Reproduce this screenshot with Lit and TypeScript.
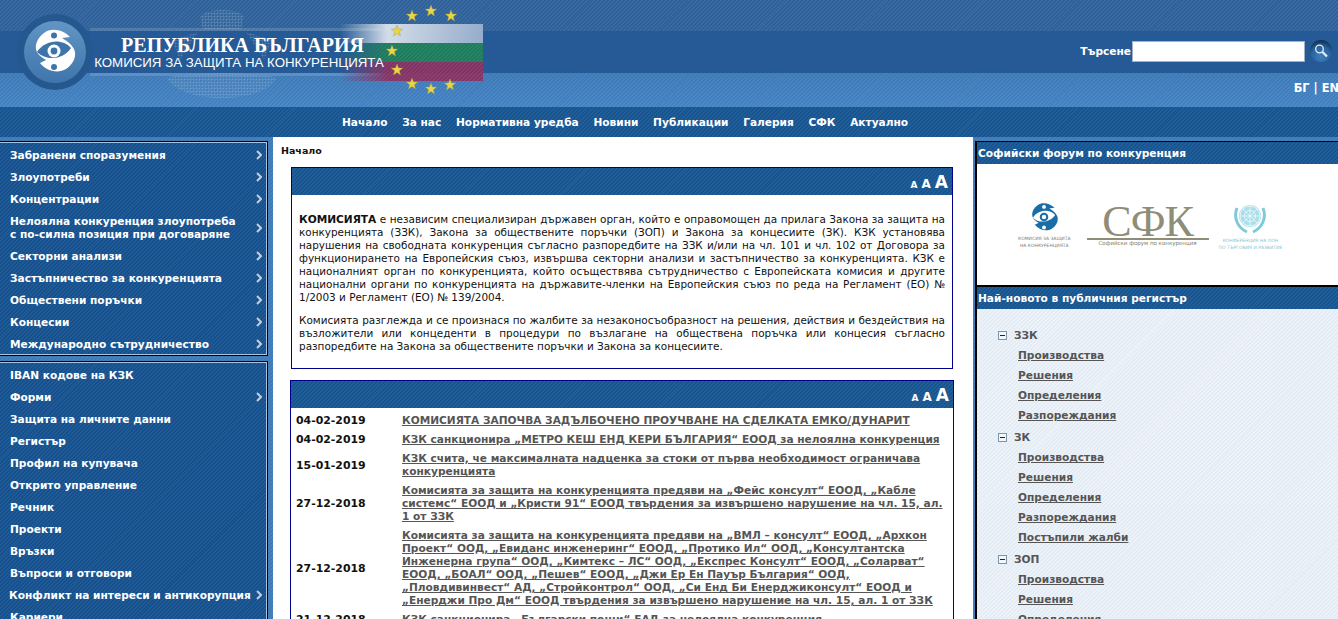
import { LitElement, html, css, svg } from "lit";
import { customElement } from "lit/decorators.js";

type MenuItem = { label: string; arrow?: boolean };
type NewsItem = { date: string; title: string };
type TreeGroup = { name: string; links: string[] };

const menuMain: MenuItem[] = [
  { label: "Забранени споразумения", arrow: true },
  { label: "Злоупотреби", arrow: true },
  { label: "Концентрации", arrow: true },
  { label: "Нелоялна конкуренция злоупотреба с по-силна позиция при договаряне", arrow: true },
  { label: "Секторни анализи", arrow: true },
  { label: "Застъпничество за конкуренцията", arrow: true },
  { label: "Обществени поръчки", arrow: true },
  { label: "Концесии", arrow: true },
  { label: "Международно сътрудничество", arrow: true },
];

const menuOther: MenuItem[] = [
  { label: "IBAN кодове на КЗК" },
  { label: "Форми", arrow: true },
  { label: "Защита на личните данни" },
  { label: "Регистър" },
  { label: "Профил на купувача" },
  { label: "Открито управление" },
  { label: "Речник" },
  { label: "Проекти" },
  { label: "Връзки" },
  { label: "Въпроси и отговори" },
  { label: "Конфликт на интереси и антикорупция", arrow: true },
  { label: "Кариери" },
];

const navItems = ["Начало", "За нас", "Нормативна уредба", "Новини", "Публикации", "Галерия", "СФК", "Актуално"];

const news: NewsItem[] = [
  { date: "04-02-2019", title: "КОМИСИЯТА ЗАПОЧВА ЗАДЪЛБОЧЕНО ПРОУЧВАНЕ НА СДЕЛКАТА ЕМКО/ДУНАРИТ" },
  { date: "04-02-2019", title: "КЗК санкционира „МЕТРО КЕШ ЕНД КЕРИ БЪЛГАРИЯ“ ЕООД за нелоялна конкуренция" },
  { date: "15-01-2019", title: "КЗК счита, че максималната надценка за стоки от първа необходимост ограничава конкуренцията" },
  {
    date: "27-12-2018",
    title: "Комисията за защита на конкуренцията предяви на „Фейс консулт“ ЕООД, „Кабле системс“ ЕООД и „Кристи 91“ ЕООД твърдения за извършено нарушение на чл. 15, ал. 1 от ЗЗК",
  },
  {
    date: "27-12-2018",
    title: "Комисията за защита на конкуренцията предяви на „ВМЛ – консулт“ ЕООД, „Архкон Проект“ ООД, „Евиданс инженеринг“ ЕООД, „Протико Ил“ ООД, „Консултантска Инженерна група“ ООД, „Кимтекс – ЛС“ ООД, „Експрес Консулт“ ЕООД, „Соларват“ ЕООД, „БОАЛ“ ООД, „Пешев“ ЕООД, „Джи Ер Ен Пауър България“ ООД, „Пловдивинвест“ АД, „Стройконтрол“ ООД, „Си Енд Би Енерджиконсулт“ ЕООД и „Енерджи Про Дм“ ЕООД твърдения за извършено нарушение на чл. 15, ал. 1 от ЗЗК",
  },
  { date: "21-12-2018", title: "КЗК санкционира „Български пощи“ ЕАД за нелоялна конкуренция" },
];

const tree: TreeGroup[] = [
  { name: "ЗЗК", links: ["Производства", "Решения", "Определения", "Разпореждания"] },
  { name: "ЗК", links: ["Производства", "Решения", "Определения", "Разпореждания", "Постъпили жалби"] },
  { name: "ЗОП", links: ["Производства", "Решения", "Определения"] },
];

// ring of the EU stars, the ones on the right sit behind the flag
const stars = [
  [412, 16], [431, 11], [451, 16], [397, 31], [392, 51], [397, 70], [412, 84], [431, 89], [450, 85],
];

const starPoints = (cx: number, cy: number, r: number) => {
  const pts: string[] = [];
  for (let i = 0; i < 10; i++) {
    const rad = i % 2 ? r * 0.42 : r;
    const a = -Math.PI / 2 + (i * Math.PI) / 5;
    pts.push(`${(cx + rad * Math.cos(a)).toFixed(1)},${(cy + rad * Math.sin(a)).toFixed(1)}`);
  }
  return pts.join(" ");
};

// eye logo, drawn around 0,0 and about 42 units tall
const eyeMark = (fg: string, bg: string) => svg`
  <path fill=${fg} d="M16 -14 C10 -21 -3 -24 -10 -18 C-17 -13 -20 -5 -17 1 C-15 5 -11 7 -8 9 L-14 12 C-8 20 4 23 12 18 C20 13 23 4 20 -2 C17 -8 11 -11 8 -13 Z"/>
  <path fill=${bg} d="M-17 1 C-9 -11 8 -13 17 -3 C10 8 -7 11 -17 1 Z"/>
  <circle r="6.5" fill=${fg}/>
  <circle r="3.4" fill=${bg}/>
  <circle cx="0" cy="-15.5" r="3" fill=${bg}/>
  <circle cx="0" cy="16" r="3" fill=${bg}/>
`;

@customElement("app-root")
export class AppRoot extends LitElement {
  static styles = css`
    :host {
      display: block;
      height: 619px;
      overflow: hidden;
      font-family: "DejaVu Sans", Verdana, sans-serif;
      font-size: 10.6px;
      line-height: 13px;
      --stripes: repeating-linear-gradient(
        135deg,
        rgba(255, 255, 255, 0.06) 0 1.4px,
        rgba(255, 255, 255, 0) 1.4px 2.8px
      );
      background: var(--stripes), #3d7ab6;
    }

    /* header bands */
    .header {
      position: relative;
      color: #fff;
      overflow: hidden;
    }
    .band-top {
      height: 31px;
      background: var(--stripes), #2e6199;
    }
    .band-brand {
      height: 42px;
      background: #265a96;
      display: flex;
      align-items: center;
      justify-content: flex-end;
      padding-right: 6px;
    }
    .band-lang {
      height: 34px;
      background: var(--stripes), linear-gradient(#3c79b7, #4282c2);
      display: flex;
      align-items: center;
      justify-content: flex-end;
      font-size: 11.4px;
      font-weight: bold;
      white-space: nowrap;
      padding-bottom: 3px;
      box-sizing: border-box;
      margin-right: -1px;
    }
    .search {
      display: flex;
      align-items: center;
      font-weight: bold;
      margin-top: -2px;
    }
    .search input {
      box-sizing: border-box;
      width: 173px;
      height: 21px;
      margin: 0 5px 0 1px;
      padding: 0;
      border: 1px solid #9fb3c8;
      background: #fff;
    }
    .search-btn {
      width: 22px;
      height: 22px;
      display: block;
    }
    .brand-art {
      position: absolute;
      left: 0;
      top: 0;
      pointer-events: none;
    }
    .flag {
      position: absolute;
      left: 340px;
      top: 24px;
      width: 143px;
      opacity: 0.92;
      -webkit-mask-image: linear-gradient(90deg, transparent 0, #000 48px);
      mask-image: linear-gradient(90deg, transparent 0, #000 48px);
    }
    .flag div {
      height: 19px;
    }
    .flag .white {
      background: var(--stripes), linear-gradient(90deg, #e4eaf1 30%, #9db2cf);
    }
    .flag .green {
      background: var(--stripes), #1d7f56;
    }
    .flag .red {
      background: var(--stripes), #8b2f60;
    }
    .title-strip {
      position: absolute;
      left: 90px;
      top: 28px;
      width: 290px;
      height: 42px;
      border-top: 3px solid rgba(255, 255, 255, 0.14);
      border-bottom: 3px solid rgba(255, 255, 255, 0.14);
    }
    .brand-text {
      position: absolute;
      left: 93px;
      top: 36px;
      width: 292px;
      text-align: center;
      white-space: nowrap;
    }
    .brand-text .republic {
      font: bold 20px/19px "Liberation Serif", serif;
      margin-left: 7px;
    }
    .brand-text .commission {
      font: 13.3px/15px "Liberation Sans", Arial, sans-serif;
    }

    .nav {
      height: 30px;
      background: var(--stripes), #165491;
      display: flex;
      align-items: center;
      gap: 14.7px;
      padding-left: 342px;
      font-weight: bold;
      color: #fff;
      white-space: nowrap;
    }

    /* three columns */
    .main {
      display: grid;
      grid-template-columns: 273px 700px 365px;
      align-items: start;
    }
    .left {
      padding: 4px 5px 0 0;
      display: flex;
      flex-direction: column;
      gap: 5px;
    }
    .menu {
      border: 1px solid #000;
      border-left: 0;
      box-shadow: inset 0 1px 0 #a9c4de, inset -1px 0 0 #a9c4de, inset 0 -1px 0 #a9c4de;
      padding: 1px 1px 1px 0;
      background: var(--stripes), #14508e;
      color: #fff;
      font-weight: bold;
    }
    .menu-row {
      display: flex;
      align-items: center;
      justify-content: space-between;
      min-height: 22px;
      padding: 2px 4px 0 10px;
      box-sizing: border-box;
    }
    .menu-row.two-line {
      height: 35px;
    }
    .menu-row span {
      max-width: 234px;
    }
    .menu-row.wide span {
      max-width: none;
      white-space: nowrap;
      margin-left: -1px;
    }
    .chev {
      flex: none;
      width: 6px;
      height: 10px;
    }

    .content {
      background: #fff;
      color: #111;
      min-height: 482px;
      padding: 7px 0 0 18px;
    }
    .crumb {
      font-weight: bold;
      font-size: 9.5px;
      margin: 0 0 10px -10px;
    }
    .panel {
      border: 1px solid #00008b;
      width: 660px;
    }
    .panel + .panel {
      margin: 11px 0 0 -1px;
      width: 662px;
    }
    .panel-head {
      height: 27px;
      background: var(--stripes), #165491;
      color: #fff;
      font-weight: bold;
      display: flex;
      justify-content: flex-end;
      align-items: baseline;
      gap: 4px;
      padding: 4px 4px 0 0;
      box-sizing: border-box;
      line-height: 20px;
    }
    .a-s {
      font-size: 9px;
    }
    .a-m {
      font-size: 12px;
    }
    .a-l {
      font-size: 17px;
    }
    .intro {
      padding: 18px 7px 15px;
      text-align: justify;
      font-size: 10.45px;
    }
    .intro b {
      font-size: 10.6px;
    }
    .intro p {
      margin: 0 0 10px;
    }
    .intro p:last-child {
      margin: 0;
    }
    .news {
      display: grid;
      grid-template-columns: 106px 1fr;
      padding: 3px 8px 0 5px;
      align-items: center;
    }
    .news .date {
      font-weight: bold;
      font-size: 10.9px;
    }
    .news a {
      padding: 3px 0;
      font-weight: bold;
      color: #555;
      text-decoration: underline;
    }

    .right {
      padding: 4px 0 0 2px;
    }
    .side {
      border-left: 2px solid #000;
      border-top: 1px solid #000;
    }
    .side-head {
      height: 22px;
      display: flex;
      align-items: center;
      padding-left: 1px;
      background: var(--stripes), #165491;
      color: #fff;
      font-weight: bold;
    }
    .banner {
      height: 121px;
      background: #fff;
      border-bottom: 2px solid #000;
      display: flex;
      align-items: center;
      padding-left: 41px;
      color: #7d7d72;
    }
    .org {
      display: flex;
      flex-direction: column;
      align-items: center;
      font-size: 4.5px;
      line-height: 7px;
      text-align: center;
      margin-top: 2px;
    }
    .org svg {
      display: block;
      margin-bottom: 3px;
    }
    .sfk {
      margin: 2px 10px 0 16px;
      width: 122px;
      text-align: center;
      font-size: 5.5px;
      line-height: 6px;
    }
    .sfk strong {
      display: block;
      font: 44px/32px "Liberation Serif", serif;
      color: #8f8d78;
      letter-spacing: -1px;
      border-bottom: 2px solid #8f8d78;
    }
    .un {
      color: #7fc4d3;
    }
    .register {
      background: repeating-linear-gradient(
          135deg,
          rgba(255, 255, 255, 0.35) 0 1.4px,
          rgba(255, 255, 255, 0) 1.4px 2.8px
        ),
        #e3ecf4;
      padding: 15px 0 0 21px;
      height: 320px;
      color: #555;
      font-weight: bold;
    }
    .tree-head {
      height: 22px;
      display: flex;
      align-items: center;
      gap: 7px;
    }
    .toggle {
      width: 7px;
      height: 7px;
      border: 1px solid #7b95ad;
      background: #f4f7fa;
      position: relative;
    }
    .toggle::after {
      content: "";
      position: absolute;
      left: 1px;
      right: 1px;
      top: 3px;
      height: 1px;
      background: #222;
    }
    .tree-link {
      display: block;
      height: 20px;
      line-height: 18px;
      margin-left: 20px;
      color: #555;
      text-decoration: underline;
    }
  `;

  renderMenu(items: MenuItem[]) {
    return html`<div class="menu">
      ${items.map(
        (item) => html`<div class="menu-row ${item.label.length > 50 ? "two-line" : ""} ${item.label.startsWith("Конфликт") ? "wide" : ""}">
          <span>${item.label}</span>
          ${item.arrow
            ? html`<svg class="chev" viewBox="0 0 6 10"><path d="M1 1 L5 5 L1 9" fill="none" stroke="#c3ced9" stroke-width="2"/></svg>`
            : ""}
        </div>`
      )}
    </div>`;
  }

  renderSizes() {
    return html`<div class="panel-head"><span class="a-s">A</span><span class="a-m">A</span><span class="a-l">A</span></div>`;
  }

  render() {
    return html`
      <header class="header">
        <div class="band-top"></div>
        <div class="band-brand">
          <div class="search">
            Търсене<input type="text" aria-label="Търсене" />
            <svg class="search-btn" viewBox="0 0 22 22">
              <defs>
                <radialGradient id="sb" cx="0.5" cy="0.75" r="0.75">
                  <stop offset="0" stop-color="#3f7fbe" />
                  <stop offset="0.6" stop-color="#2a639e" />
                  <stop offset="1" stop-color="#0f2f50" />
                </radialGradient>
              </defs>
              <circle cx="11" cy="11" r="11" fill="url(#sb)" />
              <circle cx="9.5" cy="9" r="3.8" fill="none" stroke="#e6edf4" stroke-width="1.3" />
              <path d="M12.5 12 L17 16.5" stroke="#e6edf4" stroke-width="2.2" />
            </svg>
          </div>
        </div>
        <div class="band-lang">БГ | EN</div>
        <div class="nav">${navItems.map((n) => html`<span>${n}</span>`)}</div>

        <div class="title-strip"></div>
        <svg class="brand-art" width="500" height="107" viewBox="0 0 500 107">
          <defs>
            <linearGradient id="ball" x1="0" y1="0" x2="0" y2="1">
              <stop offset="0" stop-color="#6295c5" />
              <stop offset="1" stop-color="#3f75ab" />
            </linearGradient>
            <pattern id="dots" width="3" height="3" patternUnits="userSpaceOnUse">
              <circle cx="1.5" cy="1.5" r="1.1" fill="#c5d2df" />
            </pattern>
          </defs>
          <!-- faint state crest behind the title -->
          <g opacity="0.3" fill="url(#dots)">
            <path d="M203 30 L200 16 C208 8 236 8 244 16 L241 30 Z" />
            <path d="M172 40 L198 32 H246 L272 40 L264 60 L246 32 L198 32 L180 60 Z" />
            <path d="M167 78 C178 72 266 72 277 78 C270 90 250 98 222 98 C194 98 174 90 167 78 Z" />
          </g>
          <circle cx="55" cy="52" r="38" fill="#24588f" />
          <circle cx="55" cy="52" r="31" fill="url(#ball)" />
          <g transform="translate(54 51)">${eyeMark("#fff", "#3e74aa")}</g>
        </svg>
        <div class="flag">
          <div class="white"></div>
          <div class="green"></div>
          <div class="red"></div>
        </div>
        <svg class="brand-art" width="500" height="107" viewBox="0 0 500 107">
          ${stars.map(([x, y]) => svg`<polygon points=${starPoints(x, y, 6)} fill="#e9d545" stroke="#a39a3c" stroke-width="0.4" />`)}
        </svg>
        <div class="brand-text">
          <div class="republic">РЕПУБЛИКА БЪЛГАРИЯ</div>
          <div class="commission">КОМИСИЯ ЗА ЗАЩИТА НА КОНКУРЕНЦИЯТА</div>
        </div>
      </header>

      <div class="main">
        <aside class="left">${this.renderMenu(menuMain)} ${this.renderMenu(menuOther)}</aside>

        <main class="content">
          <div class="crumb">Начало</div>
          <section class="panel">
            ${this.renderSizes()}
            <div class="intro">
              <p>
                <b>КОМИСИЯТА</b> е независим специализиран държавен орган, който е оправомощен да прилага Закона за защита на
                конкуренцията (ЗЗК), Закона за обществените поръчки (ЗОП) и Закона за концесиите (ЗК). КЗК установява
                нарушения на свободната конкуренция съгласно разпоредбите на ЗЗК и/или на чл. 101 и чл. 102 от Договора за
                функционирането на Европейския съюз, извършва секторни анализи и застъпничество за конкуренцията. КЗК е
                националният орган по конкуренцията, който осъществява сътрудничество с Европейската комисия и другите
                национални органи по конкуренцията на държавите-членки на Европейския съюз по реда на Регламент (ЕО) №
                1/2003 и Регламент (ЕО) № 139/2004.
              </p>
              <p>
                Комисията разглежда и се произнася по жалбите за незаконосъобразност на решения, действия и бездействия на
                възложители или концеденти в процедури по възлагане на обществена поръчка или концесия съгласно
                разпоредбите на Закона за обществените поръчки и Закона за концесиите.
              </p>
            </div>
          </section>
          <section class="panel">
            ${this.renderSizes()}
            <div class="news">
              ${news.map((n) => html`<span class="date">${n.date}</span><a href="#">${n.title}</a>`)}
            </div>
          </section>
        </main>

        <aside class="right">
          <div class="side">
            <div class="side-head">Софийски форум по конкуренция</div>
            <div class="banner">
              <div class="org">
                <svg width="30" height="30" viewBox="-23 -23 46 46">${eyeMark("#1a6ea8", "#fff")}</svg>
                КОМИСИЯ ЗА ЗАЩИТА<br />НА КОНКУРЕНЦИЯТА
              </div>
              <div class="sfk"><strong>СФК</strong>Софийски форум по конкуренция</div>
              <div class="org un">
                <svg width="34" height="34" viewBox="0 0 34 34" fill="none" stroke="#7fc9dc">
                  <circle cx="17" cy="16" r="11" fill="#a9deea" stroke="none" />
                  <circle cx="17" cy="16" r="10" stroke="#fff" stroke-width="0.7" />
                  <circle cx="17" cy="16" r="5.5" stroke="#fff" stroke-width="0.7" />
                  <path d="M7 16 H27 M17 6 V26 M10 9 L24 23 M24 9 L10 23" stroke="#fff" stroke-width="0.6" />
                  <path d="M4 8 C0 18 5 28 14 32 M30 8 C34 18 29 28 20 32" stroke-width="3" />
                </svg>
                КОНФЕРЕНЦИЯ НА ООН<br />ПО ТЪРГОВИЯ И РАЗВИТИЕ
              </div>
            </div>
            <div class="side-head">Най-новото в публичния регистър</div>
            <div class="register">
              ${tree.map(
                (g) => html`<div class="tree-head"><i class="toggle"></i>${g.name}</div>
                  ${g.links.map((l) => html`<a class="tree-link" href="#">${l}</a>`)}`
              )}
            </div>
          </div>
        </aside>
      </div>
    `;
  }
}
